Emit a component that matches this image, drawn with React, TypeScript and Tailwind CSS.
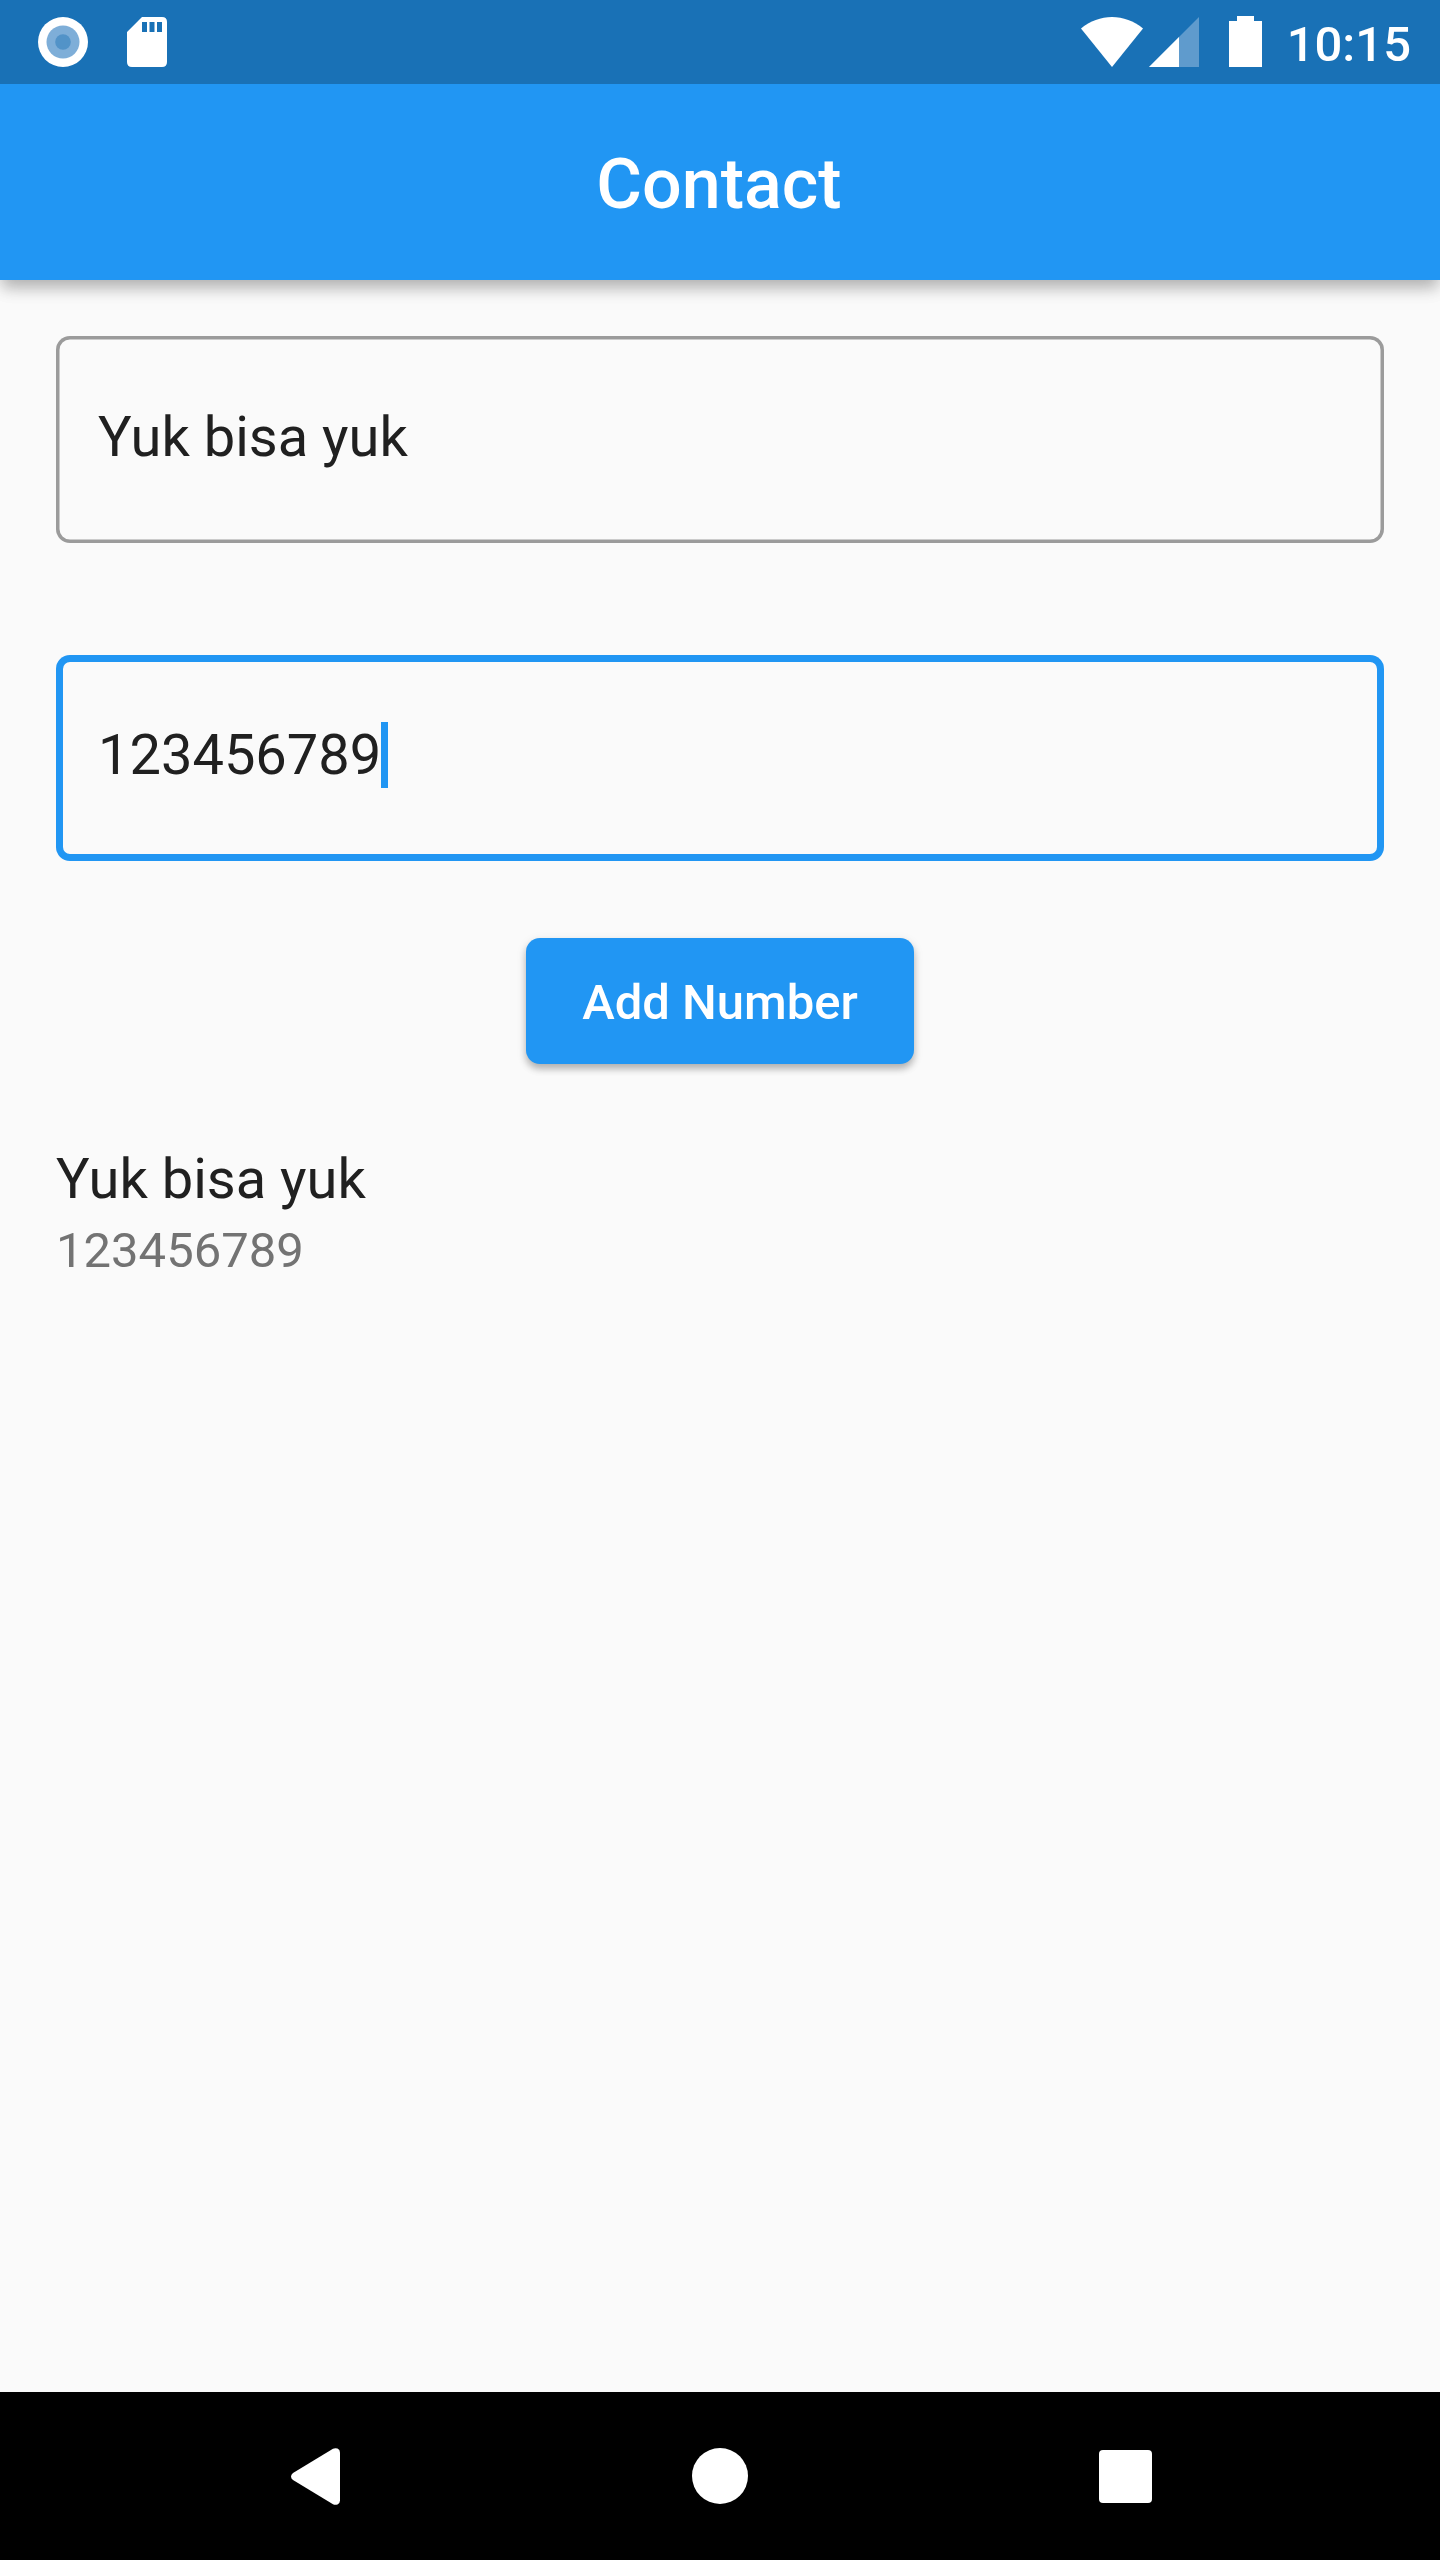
import React from "react";

function StatusBar() {
  return (
    <div className="relative z-10 flex h-[84px] items-start bg-[#1971b6] text-white">
      <svg className="ml-[38px] mt-[17px] h-[50px] w-[50px] shrink-0" viewBox="0 0 50 50">
        <circle cx="25" cy="25" r="25" fill="#fff" />
        <circle cx="25" cy="25" r="16.5" fill="#7eaed8" />
        <circle cx="25" cy="25" r="7.8" fill="#5293c8" />
      </svg>
      <svg className="ml-[39px] mt-[17px] h-[50px] w-10 shrink-0" viewBox="0 0 40 50">
        <path
          fill="#fff"
          fillRule="evenodd"
          d="M15 0H35Q40 0 40 5V45Q40 50 35 50H5Q0 50 0 45V15ZM15 5V15H20V5ZM22.5 5V15H27.5V5ZM30 5V15H35V5Z"
        />
      </svg>
      <svg className="ml-auto mt-[17px] h-[50px] w-[62px] shrink-0" viewBox="0 0 62 50">
        <path fill="#fff" d="M31 50L0 11.5C9 4 20 0 31 0S53 4 62 11.5Z" />
      </svg>
      <svg className="ml-1.5 mt-[17px] h-[50px] w-[50px] shrink-0" viewBox="0 0 50 50">
        <path fill="#5f9bcd" d="M50 0V50H0Z" />
        <path fill="#fff" d="M30 20V50H0Z" />
      </svg>
      <svg className="ml-[30px] mt-4 h-[51px] w-[33px] shrink-0" viewBox="0 0 33 51">
        <path fill="#fff" d="M8 0H25V5H33V51H0V5H8Z" />
      </svg>
      <span className="ml-[25px] mr-[29px] mt-4 text-[49px] font-medium leading-[58px]">10:15</span>
    </div>
  );
}

function NavigationBar() {
  return (
    <div className="flex h-[168px] items-start bg-black">
      <svg className="ml-[291px] mt-14 h-[57px] w-[49px] shrink-0" viewBox="0 0 49 57">
        <path
          fill="#fff"
          d="M2 25L42 .8Q44 -.3 46.500 .6Q49 1.800 49 4.500V52.500Q49 55.200 46.500 56.400Q44 57.300 42 56.200L2 32Q0 30.500 0 28.500T2 25Z"
        />
      </svg>
      <div className="ml-[351.500px] mt-[55.500px] size-[56.500px] shrink-0 rounded-full bg-white" />
      <div className="ml-[351px] mt-[58px] size-[53px] shrink-0 rounded bg-white" />
    </div>
  );
}

export default function App() {
  return (
    <div className="flex h-[2560px] w-[1440px] flex-col overflow-hidden bg-[#fafafa] font-['Roboto',sans-serif] text-[#202020]">
      <StatusBar />
      <header className="h-[196px] bg-[#2196f3] pt-[59px] pr-[2px] text-center text-[70px] font-medium leading-[82px] text-white shadow-[0_10px_14px_-2px_rgba(0,0,0,0.23),0_4px_22px_rgba(0,0,0,0.1)]">
        Contact
      </header>
      <main className="flex flex-1 flex-col px-14 pt-14">
        <div className="h-[206.500px] rounded-[14px] pl-[42px] pt-[68px] text-[56px] leading-[66px] shadow-[inset_0_0_0_3.500px_#9b9b9b]">
          Yuk bisa yuk
        </div>
        <div className="mt-28 flex h-[206.500px] items-start rounded-[14px] pl-[42px] pt-[67.500px] text-[56px] leading-[66px] shadow-[inset_0_0_0_7px_#2196f3]">
          <span>123456789</span>
          <span className="h-[65.700px] w-[7px] bg-[#2196f3]" />
        </div>
        <button className="mt-[77px] h-[126px] w-[388px] self-center rounded-[14px] bg-[#2196f3] pt-[3px] text-[49px] font-medium leading-[58px] text-white shadow-[0_5px_7px_rgba(0,0,0,0.23),0_3px_11px_rgba(0,0,0,0.1)]">
          Add Number
        </button>
        <div className="pt-[82px]">
          <p className="text-[56px] leading-[66px]">Yuk bisa yuk</p>
          <p className="mt-2.5 text-[49px] leading-[58px] text-[#737373]">123456789</p>
        </div>
      </main>
      <NavigationBar />
    </div>
  );
}
